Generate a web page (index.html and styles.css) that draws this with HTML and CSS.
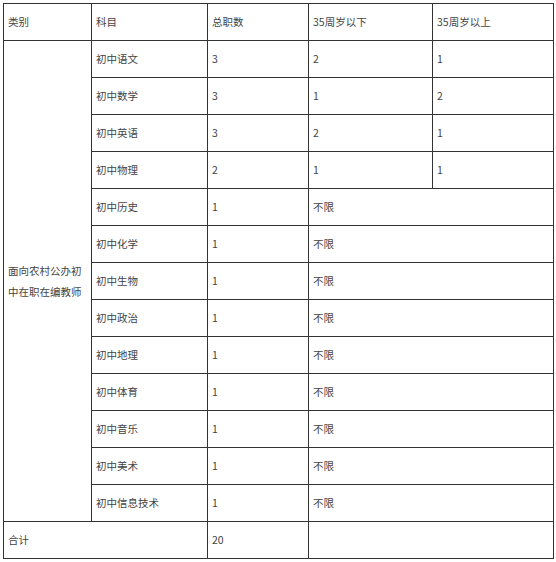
FILE: index.html
```html
<!DOCTYPE html>
<html lang="zh-CN">
<head>
<meta charset="utf-8">
<title>岗位表</title>
<link rel="stylesheet" href="styles.css">
</head>
<body>
<div class="wrap">
<table class="posts">
<colgroup>
<col class="c1"><col class="c2"><col class="c3"><col class="c4"><col class="c5">
</colgroup>
<tbody>
<tr><td>类别</td><td>科目</td><td>总职数</td><td>35周岁以下</td><td>35周岁以上</td></tr>
<tr><td rowspan="13" class="cat">面向农村公办初中在职在编教师</td><td>初中语文</td><td>3</td><td>2</td><td>1</td></tr>
<tr><td>初中数学</td><td>3</td><td>1</td><td>2</td></tr>
<tr><td>初中英语</td><td>3</td><td>2</td><td>1</td></tr>
<tr><td>初中物理</td><td>2</td><td>1</td><td>1</td></tr>
<tr><td>初中历史</td><td>1</td><td colspan="2">不限</td></tr>
<tr><td>初中化学</td><td>1</td><td colspan="2">不限</td></tr>
<tr><td>初中生物</td><td>1</td><td colspan="2">不限</td></tr>
<tr><td>初中政治</td><td>1</td><td colspan="2">不限</td></tr>
<tr><td>初中地理</td><td>1</td><td colspan="2">不限</td></tr>
<tr><td>初中体育</td><td>1</td><td colspan="2">不限</td></tr>
<tr><td>初中音乐</td><td>1</td><td colspan="2">不限</td></tr>
<tr><td>初中美术</td><td>1</td><td colspan="2">不限</td></tr>
<tr><td>初中信息技术</td><td>1</td><td colspan="2">不限</td></tr>
<tr><td colspan="2">合计</td><td>20</td><td colspan="2"></td></tr>
</tbody>
</table>
</div>
</body>
</html>
```

FILE: styles.css
```css
html, body {
  margin: 0;
  padding: 0;
  background: #ffffff;
}
.wrap {
  padding: 3px 0 0 3px;
}
.posts {
  border-collapse: collapse;
  table-layout: fixed;
  width: 551px;
  font-family: "Noto Sans CJK SC", "Microsoft YaHei", sans-serif;
  font-size: 10.5px;
  color: #444444;
}
.c1 { width: 88px; }
.c2 { width: 116px; }
.c3 { width: 101px; }
.c4 { width: 124px; }
.c5 { width: 121px; }
.posts td {
  border: 1px solid #333333;
  height: 37px;
  padding: 0 4px;
  box-sizing: border-box;
  vertical-align: middle;
  text-align: left;
  line-height: 14px;
  overflow: hidden;
}
.posts td.cat {
  line-height: 21px;
  padding: 0 2px 0 4px;
}
```
